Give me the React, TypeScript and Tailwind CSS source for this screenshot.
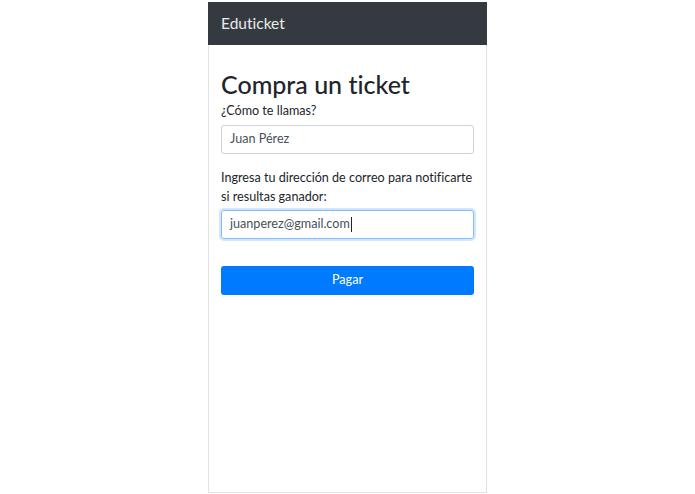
export default function App() {
  return (
    <div
      className="min-h-screen w-full bg-white flex justify-center pt-[2px] [font-variant-ligatures:none]"
      style={{ fontFamily: 'Lato, "Open Sans", sans-serif' }}
    >
      <div className="w-[279px] h-[491px] border-x border-b border-[#e2e2e2] flex flex-col">
        {/* Navbar */}
        <nav className="h-[43px] bg-[#343a40] px-3 flex items-center -mx-px">
          <span className="text-[15.5px] text-white/90 pl-px">Eduticket</span>
        </nav>

        <main className="px-3 pt-[24px] text-[#212529]">
          <h1 className="text-[25px] leading-[30px] font-medium">Compra un ticket</h1>

          <form className="mt-[2px]" onSubmit={(e) => e.preventDefault()}>
            <label className="block text-[12.6px] leading-[19px] mb-[5px]">¿Cómo te llamas?</label>
            <div className="h-[29px] border border-[#ced4da] rounded-[3px] px-[8px] flex items-center text-[12.6px] text-[#495057]">
              Juan Pérez
            </div>

            <label className="block text-[12.6px] leading-[19px] mt-[14px] mb-[4px]">
              Ingresa tu dirección de correo para notificarte si resultas ganador:
            </label>
            <div className="h-[29px] border border-[#80bdff] rounded-[3px] px-[8px] flex items-center text-[12.6px] text-[#495057] shadow-[0_0_0_2px_rgba(0,123,255,0.18)]">
              juanperez@gmail.com
              <span className="inline-block w-px h-[15px] bg-[#222] ml-px" />
            </div>

            <button
              type="submit"
              className="mt-[27px] w-full h-[29px] bg-[#007bff] rounded-[3px] text-white text-[12.6px] flex items-center justify-center"
            >
              Pagar
            </button>
          </form>
        </main>
      </div>
    </div>
  );
}
